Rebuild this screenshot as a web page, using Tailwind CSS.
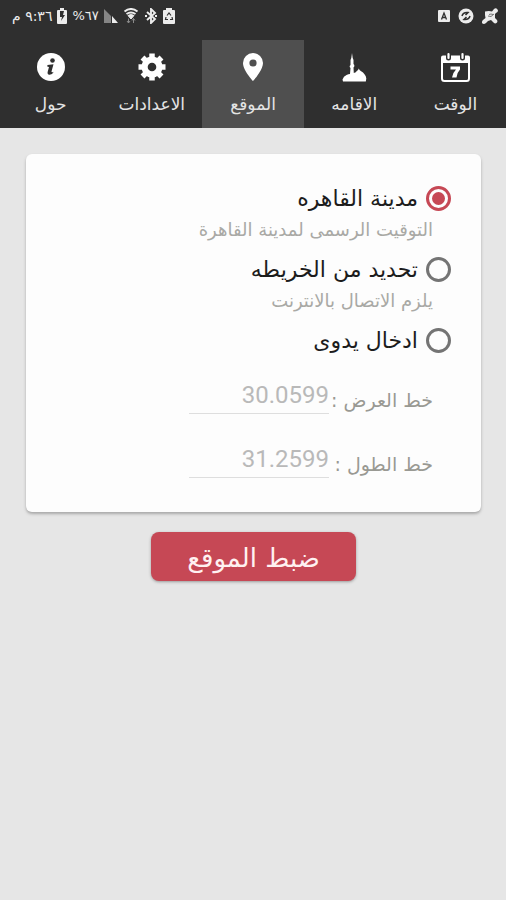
<!DOCTYPE html>
<html lang="ar" dir="rtl">
<head>
<meta charset="utf-8">
<meta name="viewport" content="width=device-width, initial-scale=1">
<title>الموقع</title>
<script src="https://cdn.jsdelivr.net/npm/@tailwindcss/browser@4"></script>
</head>
<body class="min-h-screen bg-[#e6e6e6] font-['DejaVu_Sans',sans-serif]">
<header class="bg-[#2f2f2f] text-white">
  <div class="flex h-10 items-start justify-between pt-2 pr-2 pl-3 text-[#ececec]">
    <div class="flex items-center gap-2">
      <svg class="size-4" viewBox="0 0 16 16" fill="currentColor"><path d="M3 3.500q4-1 7 0L12 1q2-1.500 3.500.5T14 5l-1 1v4l2 2q1 2-.5 3t-3-.5L9 12l-3 1-2 2q-2 1.500-3.500.5T1 12l2.500-2L3 7z"/><path d="M6 8q3 2 6-2M7 6.500q2-1 4 0" stroke="#5a5a5a" stroke-width=".8" fill="none"/></svg>
      <svg class="size-4" viewBox="0 0 16 16"><circle cx="8" cy="8" r="7.500" fill="currentColor"/><path d="M4 8q1-4 6-3.500L7.500 7M12 8q-1 4-6 3.500L8.500 9" fill="none" stroke="#2f2f2f" stroke-width="1.500"/></svg>
      <svg class="h-4 w-3" viewBox="0 0 12 16"><rect y="2" width="12" height="12" rx="1" fill="currentColor"/><path d="M3.500 11.500L6 5l2.500 6.500M4.500 9.500h3" fill="none" stroke="#2f2f2f" stroke-width="1.300"/></svg>
    </div>
    <div class="flex items-center gap-1">
      <svg class="h-4 w-3" viewBox="0 0 12 16"><path d="M1 2h2V0h6v2h2q1 0 1 1v12q0 1-1 1H1q-1 0-1-1V3q0-1 1-1z" fill="currentColor"/><path d="M4 7.500L6 5l2 2.500M9 9l.5 2.500H7M5 11.500H2.500L3 9" fill="none" stroke="#2f2f2f" stroke-width="1.200"/></svg>
      <svg class="size-4" viewBox="0 0 16 16" fill="none" stroke="currentColor" stroke-width="1.900"><path d="M4 4l8 7-4 4V1l4 4-8 7M2 8h2M12 8h2"/></svg>
      <svg class="size-4" viewBox="0 0 16 16" fill="none" stroke="currentColor"><path d="M1.500 3.500q6.500-5 13 0M3.500 6q4.500-3 9 0" stroke-width="2"/><path d="M5 7.500q3-2 6 0L8 11z" fill="currentColor"/><path d="M5.500 10.500v4.500M4 13l1.500 2L7 13M10.500 15v-4.500M9 12.500l1.500-2 1.500 2" stroke="#8a8a8a"/></svg>
      <svg class="size-4" viewBox="0 0 16 16"><path d="M1 1l7 7v7H1z" fill="#858585"/><path d="M9 8l6 7H9z" fill="currentColor"/></svg>
      <span dir="ltr" class="text-[13px] leading-4">%٦٧</span>
      <svg class="h-4 w-3" viewBox="0 0 12 16"><path d="M2 2h2V0h4v2h2q1 0 1 1v12q0 1-1 1H2q-1 0-1-1V3q0-1 1-1z" fill="currentColor"/><path d="M4 3h4L7 7h2l-4 6 1-4H4z" fill="#2f2f2f"/></svg>
      <span class="text-sm leading-4">٩:٣٦ م</span>
    </div>
  </div>
  <nav class="grid h-22 grid-cols-5 text-[17px] leading-6 text-[#e4e4e4]">
    <a href="#" class="flex flex-col items-center gap-2 pt-3">
      <svg class="size-8 text-white" viewBox="0 0 32 32" fill="none" stroke="currentColor"><rect x="3" y="5" width="27" height="24" rx="2.500" stroke-width="2"/><path d="M2 11V5.500q0-2 2-2h25q2 0 2 2V11z" fill="currentColor" stroke="none"/><path d="M9.500 2v4M23.500 2v4" stroke="#2f2f2f" stroke-width="5" stroke-linecap="round"/><path d="M9.500 2v4M23.500 2v4" stroke-width="2.200" stroke-linecap="round"/><path d="M11.500 14.500h9.500v3q-3 3-3.500 8H13q.5-4.500 4-8h-5.500z" fill="currentColor" stroke="none"/></svg>
      <span>الوقت</span>
    </a>
    <a href="#" class="flex flex-col items-center gap-2 pt-3">
      <svg class="size-8 text-white" viewBox="0 0 32 32" fill="currentColor"><path d="M14 1l.7 5 .8 2v4l.8 1v1.500l-.8 1 .3 5.500q2.500-.5 3-2 1.500-1 2-2.500.5 1.500 2 2.500 5 3 5.500 7.500l-.5 3H5l-.5-2q1-3.500 4-4.500 2-1 3.500-1l.5-6-.8-1V14l.8-1V8l.8-2z"/></svg>
      <span>الاقامه</span>
    </a>
    <a href="#" aria-current="page" class="flex flex-col items-center gap-2 bg-[#4f4f4f] pt-3">
      <svg class="size-8 text-white" viewBox="0 0 32 32" fill="currentColor"><path fill-rule="evenodd" d="M16 1a10 10 0 0 0-10 10c0 7.500 10 18 10 18s10-10.500 10-18A10 10 0 0 0 16 1zm0 6.400a3.600 3.600 0 1 1 0 7.200 3.600 3.600 0 0 1 0-7.200z"/></svg>
      <span>الموقع</span>
    </a>
    <a href="#" class="flex flex-col items-center gap-2 pt-3">
      <svg class="size-8" viewBox="0 0 32 32" fill="white"><circle cx="16" cy="15" r="10.500"/><g stroke="white" stroke-width="5.500"><path d="M16 1.500v27M2.500 15h27M6.500 5.500l19 19M25.500 5.500l-19 19"/></g><circle cx="16" cy="15" r="4.300" fill="#2f2f2f"/></svg>
      <span>الاعدادات</span>
    </a>
    <a href="#" class="flex flex-col items-center gap-2 pt-3">
      <svg class="size-8" viewBox="0 0 32 32"><circle cx="16" cy="15" r="14" fill="white"/><circle cx="17.500" cy="8.500" r="2.300" fill="#2f2f2f"/><path d="M12.500 13l6-.8-2 7.300q-.2 1.500 2.300.3-1.500 3.200-4.500 3-2.300-.3-1.600-3l1.300-4.800-1.800-.5z" fill="#2f2f2f"/></svg>
      <span>حول</span>
    </a>
  </nav>
</header>
<main class="pt-[26px] pr-[25px] pl-[26px]">
  <form>
    <section class="rounded-md bg-[#fdfdfd] px-[30px] pt-6 pb-[34px] shadow-[0_2px_3px_#a8a8a8]">
      <label class="flex h-10 items-center gap-2 text-[22px] text-[#1c1c1c]">
        <input type="radio" name="place" checked class="size-[25px] shrink-0 appearance-none rounded-full border-[3px] border-[#686868] bg-clip-content p-[3px] checked:border-[#c64855] checked:bg-[#c64855]">
        <span>مدينة القاهره</span>
      </label>
      <p class="h-[31px] pr-[18px] text-lg leading-6 text-[#a9a9a5]">التوقيت الرسمى لمدينة القاهرة</p>
      <label class="flex h-10 items-center gap-2 text-[22px] text-[#1c1c1c]">
        <input type="radio" name="place" class="size-[25px] shrink-0 appearance-none rounded-full border-[3px] border-[#747474] bg-clip-content p-[3px] checked:border-[#c64855] checked:bg-[#c64855]">
        <span>تحديد من الخريطه</span>
      </label>
      <p class="h-[31px] pr-[18px] text-lg leading-6 text-[#a9a9a5]">يلزم الاتصال بالانترنت</p>
      <label class="flex h-10 items-center gap-2 text-[22px] text-[#1c1c1c]">
        <input type="radio" name="place" class="size-[25px] shrink-0 appearance-none rounded-full border-[3px] border-[#747474] bg-clip-content p-[3px] checked:border-[#c64855] checked:bg-[#c64855]">
        <span>ادخال يدوى</span>
      </label>
      <div class="mt-[14px] flex flex-col gap-6 pr-[18px] text-[19px] text-[#999993]">
        <div class="flex items-end gap-1">
          <label for="lat" class="w-25 pb-0.5 whitespace-nowrap leading-6">خط العرض :</label>
          <input id="lat" type="text" dir="ltr" value="30.0599" class="h-10 w-35 border-b border-[#dedede] pt-0.5 text-right font-[Roboto,sans-serif] text-2xl text-[#b9b9b9] outline-none">
        </div>
        <div class="flex items-end gap-1">
          <label for="lng" class="w-25 pb-0.5 whitespace-nowrap leading-6">خط الطول :</label>
          <input id="lng" type="text" dir="ltr" value="31.2599" class="h-10 w-35 border-b border-[#dedede] pt-0.5 text-right font-[Roboto,sans-serif] text-2xl text-[#b9b9b9] outline-none">
        </div>
      </div>
    </section>
    <button type="button" class="mx-auto mt-5 block rounded-lg bg-[#c64855] px-9 pt-2 pb-[5px] text-[26px] leading-9 text-[#fff1f1] shadow-[0_1px_3px_#999999]">ضبط الموقع</button>
  </form>
</main>
</body>
</html>
